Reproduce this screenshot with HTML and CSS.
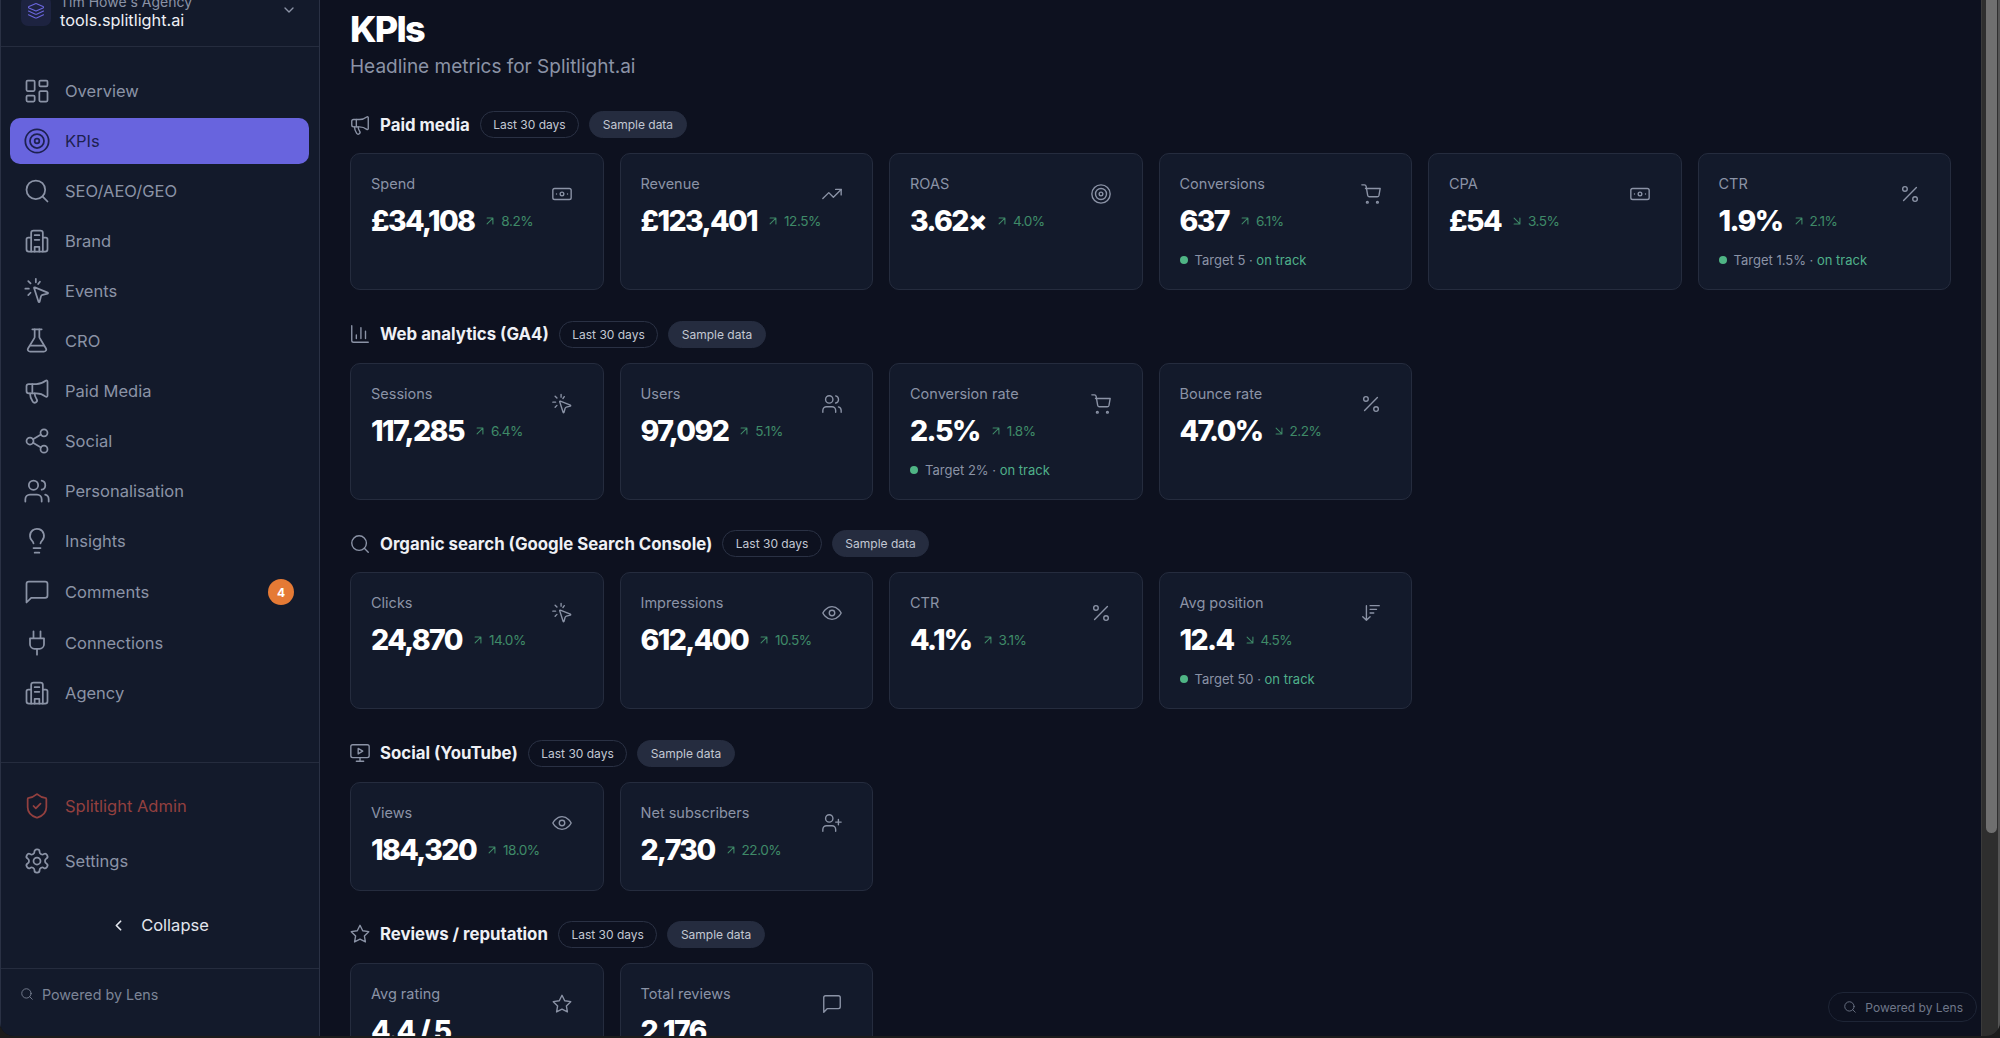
FILE: index.html
```html
<!DOCTYPE html>
<html lang="en">
<head>
<meta charset="utf-8">
<title>KPIs</title>
<link rel="stylesheet" href="styles.css">
</head>
<body>
<svg class="defs" width="0" height="0" aria-hidden="true">
<defs>
<symbol id="i-grid" viewBox="0 0 24 24"><rect x="3" y="3" width="7" height="9" rx="1"/><rect x="14" y="3" width="7" height="5" rx="1"/><rect x="14" y="12" width="7" height="9" rx="1"/><rect x="3" y="16" width="7" height="5" rx="1"/></symbol>
<symbol id="i-target" viewBox="0 0 24 24"><circle cx="12" cy="12" r="10"/><circle cx="12" cy="12" r="6"/><circle cx="12" cy="12" r="2"/></symbol>
<symbol id="i-search" viewBox="0 0 24 24"><circle cx="11" cy="11" r="8"/><path d="m21 21-4.300-4.300"/></symbol>
<symbol id="i-building" viewBox="0 0 24 24"><path d="M7 21V5a2 2 0 0 1 2-2h6a2 2 0 0 1 2 2v16"/><path d="M7 9H4.500a1.500 1.500 0 0 0-1.500 1.500V19a2 2 0 0 0 2 2h14a2 2 0 0 0 2-2v-8.500A1.500 1.500 0 0 0 19.500 9H17"/><path d="M10 7h4M10 11h4M10 21v-4h4v4"/></symbol>
<symbol id="i-click" viewBox="0 0 24 24"><path d="M9.500 9.500a.5.5 0 0 1 .65-.65l11 4.500a.5.5 0 0 1-.06.95l-4.300 1.100a2 2 0 0 0-1.450 1.450l-1.100 4.300a.5.5 0 0 1-.95.06z"/><path d="M4.500 3.500l2 2M11 1.500v3M2 10h3M4.500 15.500l2-2M14.500 4l-1.500 2"/></symbol>
<symbol id="i-flask" viewBox="0 0 24 24"><path d="M14 2v6.500a2 2 0 0 0 .3 1l5.400 8.900A1.700 1.700 0 0 1 18.300 21H5.700a1.700 1.700 0 0 1-1.400-2.600l5.400-8.900a2 2 0 0 0 .3-1V2"/><path d="M8 2h8M6.500 16h11"/></symbol>
<symbol id="i-mega" viewBox="0 0 24 24"><path d="M11 6a13 13 0 0 0 8.400-2.800A1 1 0 0 1 21 4v12a1 1 0 0 1-1.600.8A13 13 0 0 0 11 14H5a2 2 0 0 1-2-2V8a2 2 0 0 1 2-2z"/><path d="M6 14a12 12 0 0 0 2.400 7.200 2 2 0 0 0 3.200-2.400A8 8 0 0 1 10 14"/><path d="M8 6v8"/></symbol>
<symbol id="i-share" viewBox="0 0 24 24"><circle cx="18" cy="5" r="3"/><circle cx="6" cy="12" r="3"/><circle cx="18" cy="19" r="3"/><path d="m8.600 13.500 6.800 4M15.400 6.500l-6.800 4"/></symbol>
<symbol id="i-users" viewBox="0 0 24 24"><circle cx="9" cy="7" r="4"/><path d="M2 21v-2a4 4 0 0 1 4-4h6a4 4 0 0 1 4 4v2M16 3.100a4 4 0 0 1 0 7.800M22 21v-2a4 4 0 0 0-3-3.900"/></symbol>
<symbol id="i-bulb" viewBox="0 0 24 24"><path d="M15 14c.2-1 .7-1.700 1.500-2.500A6 6 0 1 0 6 8c0 1 .2 2.200 1.500 3.500.7.700 1.300 1.500 1.500 2.500M9 18h6M10 22h4"/></symbol>
<symbol id="i-chat" viewBox="0 0 24 24"><path d="M21 15a2 2 0 0 1-2 2H7l-4 4V5a2 2 0 0 1 2-2h14a2 2 0 0 1 2 2z"/></symbol>
<symbol id="i-plug" viewBox="0 0 24 24"><path d="M12 22v-5M9 8V2M15 8V2M18 8v5a4 4 0 0 1-4 4h-4a4 4 0 0 1-4-4V8z"/></symbol>
<symbol id="i-shield" viewBox="0 0 24 24"><path d="M20 13c0 5-3.500 7.500-7.660 8.950a1 1 0 0 1-.67-.01C7.500 20.500 4 18 4 13V6a1 1 0 0 1 1-1c2 0 4.500-1.200 6.240-2.720a1.170 1.170 0 0 1 1.520 0C14.510 3.810 17 5 19 5a1 1 0 0 1 1 1z"/><path d="m9 12 2 2 4-4"/></symbol>
<symbol id="i-gear" viewBox="0 0 24 24"><path d="M12.220 2h-.44a2 2 0 0 0-2 2v.18a2 2 0 0 1-1 1.730l-.43.250a2 2 0 0 1-2 0l-.15-.08a2 2 0 0 0-2.730.730l-.22.380a2 2 0 0 0 .730 2.730l.15.100a2 2 0 0 1 1 1.720v.510a2 2 0 0 1-1 1.740l-.15.090a2 2 0 0 0-.73 2.730l.22.380a2 2 0 0 0 2.730.730l.15-.08a2 2 0 0 1 2 0l.43.250a2 2 0 0 1 1 1.730V20a2 2 0 0 0 2 2h.44a2 2 0 0 0 2-2v-.18a2 2 0 0 1 1-1.730l.43-.250a2 2 0 0 1 2 0l.15.080a2 2 0 0 0 2.730-.730l.22-.390a2 2 0 0 0-.73-2.730l-.15-.080a2 2 0 0 1-1-1.740v-.500a2 2 0 0 1 1-1.740l.15-.090a2 2 0 0 0 .73-2.730l-.22-.380a2 2 0 0 0-2.730-.730l-.15.080a2 2 0 0 1-2 0l-.43-.250a2 2 0 0 1-1-1.730V4a2 2 0 0 0-2-2z"/><circle cx="12" cy="12" r="3"/></symbol>
<symbol id="i-layers" viewBox="0 0 24 24"><path d="M12.800 2.200a2 2 0 0 0-1.600 0L2.600 6.100a1 1 0 0 0 0 1.800l8.600 3.900a2 2 0 0 0 1.600 0l8.600-3.900a1 1 0 0 0 0-1.800z"/><path d="M2 12l9.200 4.200a2 2 0 0 0 1.600 0L22 12M2 17l9.200 4.200a2 2 0 0 0 1.600 0L22 17"/></symbol>
<symbol id="i-bill" viewBox="0 0 24 24"><rect x="2" y="6" width="20" height="12" rx="2"/><circle cx="12" cy="12" r="2"/><path d="M6 12h.01M18 12h.01"/></symbol>
<symbol id="i-trend" viewBox="0 0 24 24"><path d="M22 7l-8.500 8.500-5-5L2 17"/><path d="M16 7h6v6"/></symbol>
<symbol id="i-cart" viewBox="0 0 24 24"><circle cx="8" cy="21" r="1"/><circle cx="19" cy="21" r="1"/><path d="M2 2h2.700a2 2 0 0 1 2 1.600l1.700 9.800a2 2 0 0 0 2 1.600h8.300a2 2 0 0 0 2-1.500L22 6H6"/></symbol>
<symbol id="i-pct" viewBox="0 0 24 24"><path d="M19 5 5 19"/><circle cx="6.500" cy="6.500" r="2.500"/><circle cx="17.500" cy="17.500" r="2.500"/></symbol>
<symbol id="i-chart" viewBox="0 0 24 24"><path d="M3 3v16a2 2 0 0 0 2 2h16"/><path d="M8 17v-4M13 17V5M18 17V9"/></symbol>
<symbol id="i-eye" viewBox="0 0 24 24"><path d="M2 12s3.600-7 10-7 10 7 10 7-3.600 7-10 7-10-7-10-7z"/><circle cx="12" cy="12" r="3"/></symbol>
<symbol id="i-sort" viewBox="0 0 24 24"><path d="m3 16 4 4 4-4M7 20V4M11 4h10M11 8h7M11 12h4"/></symbol>
<symbol id="i-screen" viewBox="0 0 24 24"><rect x="2" y="3" width="20" height="14" rx="2"/><path d="M8 21h8M12 17v4M10 7l5 3-5 3z"/></symbol>
<symbol id="i-adduser" viewBox="0 0 24 24"><circle cx="9" cy="7" r="4"/><path d="M2 21v-2a4 4 0 0 1 4-4h6a4 4 0 0 1 4 4v2M19 8v6M22 11h-6"/></symbol>
<symbol id="i-star" viewBox="0 0 24 24"><path d="M12 2.500l2.950 5.980 6.600.96-4.780 4.650 1.130 6.570L12 17.560l-5.900 3.100 1.130-6.570L2.450 9.440l6.600-.96z"/></symbol>
<symbol id="i-up" viewBox="0 0 24 24"><path d="M7 17 17 7M7 7h10v10"/></symbol>
<symbol id="i-down" viewBox="0 0 24 24"><path d="M7 7l10 10M17 7v10H7"/></symbol>
</defs>
</svg>

<div class="window">
<aside class="sidebar">
  <div class="brand">
    <span class="logo"><svg class="ic ic-logo"><use href="#i-layers"/></svg></span>
    <div class="brand-text">
      <span class="agency">Tim Howe's Agency</span>
      <span class="site">tools.splitlight.ai</span>
    </div>
    <svg class="chev" viewBox="0 0 24 24"><path d="m6 9 6 6 6-6"/></svg>
  </div>
  <nav class="nav">
    <a class="nav-item"><svg class="ic"><use href="#i-grid"/></svg><span>Overview</span></a>
    <a class="nav-item active"><svg class="ic"><use href="#i-target"/></svg><span>KPIs</span></a>
    <a class="nav-item"><svg class="ic"><use href="#i-search"/></svg><span>SEO/AEO/GEO</span></a>
    <a class="nav-item"><svg class="ic"><use href="#i-building"/></svg><span>Brand</span></a>
    <a class="nav-item"><svg class="ic"><use href="#i-click"/></svg><span>Events</span></a>
    <a class="nav-item"><svg class="ic"><use href="#i-flask"/></svg><span>CRO</span></a>
    <a class="nav-item"><svg class="ic"><use href="#i-mega"/></svg><span>Paid Media</span></a>
    <a class="nav-item"><svg class="ic"><use href="#i-share"/></svg><span>Social</span></a>
    <a class="nav-item"><svg class="ic"><use href="#i-users"/></svg><span>Personalisation</span></a>
    <a class="nav-item"><svg class="ic"><use href="#i-bulb"/></svg><span>Insights</span></a>
    <a class="nav-item tall"><svg class="ic"><use href="#i-chat"/></svg><span>Comments</span><b class="badge">4</b></a>
    <a class="nav-item"><svg class="ic"><use href="#i-plug"/></svg><span>Connections</span></a>
    <a class="nav-item"><svg class="ic"><use href="#i-building"/></svg><span>Agency</span></a>
  </nav>
  <div class="side-bottom">
    <a class="nav-item admin"><svg class="ic"><use href="#i-shield"/></svg><span>Splitlight Admin</span></a>
    <a class="nav-item"><svg class="ic"><use href="#i-gear"/></svg><span>Settings</span></a>
    <div class="collapse"><svg class="chev-left" viewBox="0 0 24 24"><path d="m15 18-6-6 6-6"/></svg><span>Collapse</span></div>
  </div>
  <div class="side-foot"><svg class="ic ic-foot"><use href="#i-search"/></svg><span>Powered by Lens</span></div>
</aside>

<main class="main">
  <h1 class="title">KPIs</h1>
  <p class="subtitle">Headline metrics for Splitlight.ai</p>

  <section class="section">
    <header class="sec-head"><svg class="ic sec-ic"><use href="#i-mega"/></svg><h2>Paid media</h2><span class="chip">Last 30 days</span><span class="chip filled">Sample data</span></header>
    <div class="grid">
      <article class="card"><div class="card-top"><div><div class="label">Spend</div><div class="val-row"><span class="val">£34,108</span><span class="delta"><svg class="arrow"><use href="#i-up"/></svg>8.2%</span></div></div><svg class="ic card-ic"><use href="#i-bill"/></svg></div></article>
      <article class="card"><div class="card-top"><div><div class="label">Revenue</div><div class="val-row"><span class="val">£123,401</span><span class="delta"><svg class="arrow"><use href="#i-up"/></svg>12.5%</span></div></div><svg class="ic card-ic"><use href="#i-trend"/></svg></div></article>
      <article class="card"><div class="card-top"><div><div class="label">ROAS</div><div class="val-row"><span class="val">3.62×</span><span class="delta"><svg class="arrow"><use href="#i-up"/></svg>4.0%</span></div></div><svg class="ic card-ic"><use href="#i-target"/></svg></div></article>
      <article class="card"><div class="card-top"><div><div class="label">Conversions</div><div class="val-row"><span class="val">637</span><span class="delta"><svg class="arrow"><use href="#i-up"/></svg>6.1%</span></div></div><svg class="ic card-ic"><use href="#i-cart"/></svg></div><div class="target"><i class="dot"></i>Target 5 · <em>on track</em></div></article>
      <article class="card"><div class="card-top"><div><div class="label">CPA</div><div class="val-row"><span class="val">£54</span><span class="delta"><svg class="arrow"><use href="#i-down"/></svg>3.5%</span></div></div><svg class="ic card-ic"><use href="#i-bill"/></svg></div></article>
      <article class="card"><div class="card-top"><div><div class="label">CTR</div><div class="val-row"><span class="val">1.9%</span><span class="delta"><svg class="arrow"><use href="#i-up"/></svg>2.1%</span></div></div><svg class="ic card-ic"><use href="#i-pct"/></svg></div><div class="target"><i class="dot"></i>Target 1.5% · <em>on track</em></div></article>
    </div>
  </section>

  <section class="section">
    <header class="sec-head"><svg class="ic sec-ic"><use href="#i-chart"/></svg><h2>Web analytics (GA4)</h2><span class="chip">Last 30 days</span><span class="chip filled">Sample data</span></header>
    <div class="grid">
      <article class="card"><div class="card-top"><div><div class="label">Sessions</div><div class="val-row"><span class="val">117,285</span><span class="delta"><svg class="arrow"><use href="#i-up"/></svg>6.4%</span></div></div><svg class="ic card-ic"><use href="#i-click"/></svg></div></article>
      <article class="card"><div class="card-top"><div><div class="label">Users</div><div class="val-row"><span class="val">97,092</span><span class="delta"><svg class="arrow"><use href="#i-up"/></svg>5.1%</span></div></div><svg class="ic card-ic"><use href="#i-users"/></svg></div></article>
      <article class="card"><div class="card-top"><div><div class="label">Conversion rate</div><div class="val-row"><span class="val">2.5%</span><span class="delta"><svg class="arrow"><use href="#i-up"/></svg>1.8%</span></div></div><svg class="ic card-ic"><use href="#i-cart"/></svg></div><div class="target"><i class="dot"></i>Target 2% · <em>on track</em></div></article>
      <article class="card"><div class="card-top"><div><div class="label">Bounce rate</div><div class="val-row"><span class="val">47.0%</span><span class="delta"><svg class="arrow"><use href="#i-down"/></svg>2.2%</span></div></div><svg class="ic card-ic"><use href="#i-pct"/></svg></div></article>
    </div>
  </section>

  <section class="section">
    <header class="sec-head"><svg class="ic sec-ic"><use href="#i-search"/></svg><h2>Organic search (Google Search Console)</h2><span class="chip">Last 30 days</span><span class="chip filled">Sample data</span></header>
    <div class="grid">
      <article class="card"><div class="card-top"><div><div class="label">Clicks</div><div class="val-row"><span class="val">24,870</span><span class="delta"><svg class="arrow"><use href="#i-up"/></svg>14.0%</span></div></div><svg class="ic card-ic"><use href="#i-click"/></svg></div></article>
      <article class="card"><div class="card-top"><div><div class="label">Impressions</div><div class="val-row"><span class="val">612,400</span><span class="delta"><svg class="arrow"><use href="#i-up"/></svg>10.5%</span></div></div><svg class="ic card-ic"><use href="#i-eye"/></svg></div></article>
      <article class="card"><div class="card-top"><div><div class="label">CTR</div><div class="val-row"><span class="val">4.1%</span><span class="delta"><svg class="arrow"><use href="#i-up"/></svg>3.1%</span></div></div><svg class="ic card-ic"><use href="#i-pct"/></svg></div></article>
      <article class="card"><div class="card-top"><div><div class="label">Avg position</div><div class="val-row"><span class="val">12.4</span><span class="delta"><svg class="arrow"><use href="#i-down"/></svg>4.5%</span></div></div><svg class="ic card-ic"><use href="#i-sort"/></svg></div><div class="target"><i class="dot"></i>Target 50 · <em>on track</em></div></article>
    </div>
  </section>

  <section class="section">
    <header class="sec-head"><svg class="ic sec-ic"><use href="#i-screen"/></svg><h2>Social (YouTube)</h2><span class="chip">Last 30 days</span><span class="chip filled">Sample data</span></header>
    <div class="grid">
      <article class="card short"><div class="card-top"><div><div class="label">Views</div><div class="val-row"><span class="val">184,320</span><span class="delta"><svg class="arrow"><use href="#i-up"/></svg>18.0%</span></div></div><svg class="ic card-ic"><use href="#i-eye"/></svg></div></article>
      <article class="card short"><div class="card-top"><div><div class="label">Net subscribers</div><div class="val-row"><span class="val">2,730</span><span class="delta"><svg class="arrow"><use href="#i-up"/></svg>22.0%</span></div></div><svg class="ic card-ic"><use href="#i-adduser"/></svg></div></article>
    </div>
  </section>

  <section class="section">
    <header class="sec-head"><svg class="ic sec-ic"><use href="#i-star"/></svg><h2>Reviews / reputation</h2><span class="chip">Last 30 days</span><span class="chip filled">Sample data</span></header>
    <div class="grid">
      <article class="card short"><div class="card-top"><div><div class="label">Avg rating</div><div class="val-row"><span class="val">4.4 / 5</span></div></div><svg class="ic card-ic"><use href="#i-star"/></svg></div></article>
      <article class="card short"><div class="card-top"><div><div class="label">Total reviews</div><div class="val-row"><span class="val">2,176</span></div></div><svg class="ic card-ic"><use href="#i-chat"/></svg></div></article>
    </div>
  </section>

  <div class="lens"><svg class="ic lens-ic"><use href="#i-search"/></svg><span>Powered by Lens</span></div>
</main>
<div class="scrollbar"><div class="thumb"></div></div>
</div>
</body>
</html>
```

FILE: styles.css
```css
* { box-sizing: border-box; margin: 0; padding: 0; }
html, body { height: 100%; overflow: hidden; background: #1c1c1c; }
body { font-family: "Inter", "Liberation Sans", sans-serif; color: #e8ebf2; }
.defs { display: block; height: 0; }
.window { position: relative; display: flex; height: 1036px; overflow: hidden; border-radius: 0 0 14px 14px; background: #0d111f; }
.ic { fill: none; stroke: currentColor; stroke-width: 1.5; stroke-linecap: round; stroke-linejoin: round; flex: none; }

.sidebar { width: 320px; flex: none; display: flex; flex-direction: column; background: #131a2b; border-left: 1px solid #2a3144; border-right: 1px solid #2a3144; color: #8b93a6; }
.brand { height: 47px; flex: none; display: flex; align-items: flex-end; gap: 9px; padding: 0 22px 16px 20px; border-bottom: 1px solid #252c3e; overflow: hidden; }
.logo { width: 30px; height: 30px; flex: none; display: flex; align-items: center; justify-content: center; background: #1d2340; border-radius: 7px; margin-bottom: 4px; color: #6a66dd; }
.ic-logo { width: 18px; height: 18px; }
.brand-text { flex: 1; display: flex; flex-direction: column; min-width: 0; }
.agency { font-size: 14px; line-height: 16px; color: #8b93a6; }
.site { font-size: 16.300px; line-height: 20px; color: #eef0f5; }
.chev { width: 16px; height: 16px; fill: none; stroke: #8b93a6; stroke-width: 2; stroke-linecap: round; stroke-linejoin: round; margin: 0 0 12px; }

.nav { display: flex; flex-direction: column; padding: 19px 10px 0 9px; flex: 1; }
.nav-item { height: 50px; display: flex; align-items: center; gap: 14px; padding: 0 16px 0 13px; font-size: 16.500px; color: #8b93a6; border-radius: 10px; }
.nav-item .ic { width: 28px; height: 28px; }
.nav-item.active { height: 45.500px; margin: 2.250px 0; background: #6864de; color: #1d2150; }
.nav-item.tall { height: 52px; }
.badge { margin-left: auto; width: 26px; height: 26px; border-radius: 50%; background: #e57a35; color: #fff; font-size: 12px; font-weight: 700; display: flex; align-items: center; justify-content: center; margin-right: -1px; }

.side-bottom { flex: none; padding: 15px 10px 0 9px; border-top: 1px solid #252c3e; height: 206px; }
.side-bottom .nav-item { height: 55px; }
.admin, .nav-item.admin { color: #93403f; }
.collapse { display: flex; align-items: center; justify-content: center; gap: 14px; color: #e3e6ee; font-size: 16.500px; height: 54px; margin-top: 10px; }
.chev-left { width: 17px; height: 17px; fill: none; stroke: currentColor; stroke-width: 2.400; stroke-linecap: round; stroke-linejoin: round; }
.side-foot { flex: none; height: 68px; border-top: 1px solid #252c3e; display: flex; align-items: center; gap: 8px; padding: 0 20px 17px 19px; font-size: 14.300px; color: #7c8496; }
.ic-foot { width: 14px; height: 14px; }

.main { flex: 1; min-width: 0; padding: 9px 0 0 30px; color: #e8ebf2; position: relative; overflow: hidden; }
.title { font-size: 36px; line-height: 40px; font-weight: 800; color: #fff; letter-spacing: -1.800px; }
.subtitle { font-size: 19px; line-height: 26px; margin-top: 5px; color: #8b93a6; }
.section { margin-top: 30.400px; }
.section:first-of-type { margin-top: 31.400px; }
.sec-head { display: flex; align-items: center; height: 27px; margin-bottom: 15px; }
.sec-ic { width: 22px; height: 22px; color: #8b93a6; margin: 0 9px 0 -1px; }
.sec-head h2 { font-size: 16.800px; font-weight: 700; color: #eef0f5; margin-right: 10px; }
.chip { height: 27px; padding: 0 12.500px; border: 1px solid #2a3144; border-radius: 14px; font-size: 12px; display: flex; align-items: center; color: #c3c8d3; margin-right: 10px; white-space: nowrap; }
.chip.filled { background: #252c3f; border-color: #252c3f; }

.grid { display: grid; grid-template-columns: repeat(6, 253.500px); gap: 16px; }
.card { height: 137px; background: #131a2b; border: 1px solid #252c3e; border-radius: 10px; padding: 20px; display: flex; flex-direction: column; }
.card.short { height: 109px; }
.card-top { display: flex; justify-content: space-between; align-items: center; position: relative; }
.label { font-size: 14.500px; line-height: 20px; color: #8b93a6; }
.val-row { display: flex; align-items: center; gap: 9px; margin-top: 9px; }
.val { font-size: 28.500px; line-height: 36px; font-weight: 800; color: #fff; letter-spacing: -1.600px; white-space: nowrap; }
.delta { display: inline-flex; align-items: center; gap: 4px; font-size: 13.600px; letter-spacing: -.5px; color: #3f8a68; }
.arrow { width: 14px; height: 14px; fill: none; stroke: currentColor; stroke-width: 1.800; stroke-linecap: round; stroke-linejoin: round; }
.card-ic { width: 22px; height: 22px; color: #8b93a6; position: absolute; right: 9.500px; top: 9px; }
.target { display: flex; align-items: center; gap: 0; margin-top: 13px; font-size: 13px; color: #8b93a6; white-space: pre; }
.dot { width: 8px; height: 8px; border-radius: 50%; background: #4fb585; margin-right: 7px; }
.target em { font-style: normal; color: #4fb08a; }

.lens { position: absolute; right: 4px; bottom: 14px; height: 30px; padding: 0 13px 0 14px; display: flex; align-items: center; gap: 8px; border: 1px solid #1e2536; border-radius: 15px; background: #0d111f; font-size: 12px; color: #6f7789; }
.lens-ic { width: 14px; height: 14px; }

.scrollbar { width: 19px; flex: none; background: #2e2e2e; border-left: 1px solid #3a3a3a; border-right: 2px solid #555; position: relative; }
.thumb { position: absolute; left: 4px; width: 11px; top: 0; height: 833px; background: #6f6f6f; border-radius: 0 0 6px 6px; }
```
